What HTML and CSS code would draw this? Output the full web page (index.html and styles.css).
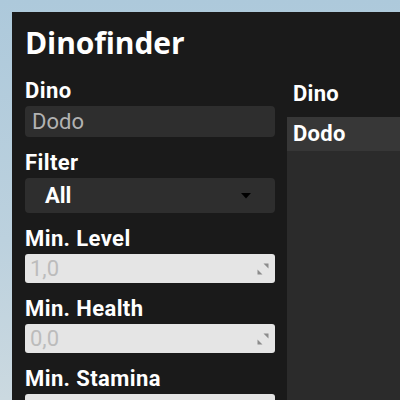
FILE: index.html
```html
<!DOCTYPE html>
<html>
<head>
<meta charset="utf-8">
<link rel="stylesheet" href="styles.css">
</head>
<body>
<div class="panel">
  <h1 class="title">Dinofinder</h1>
  <div class="columns">
    <div class="form">
      <div class="field first">
        <div class="label">Dino</div>
        <div class="text-input">Dodo</div>
      </div>
      <div class="field">
        <div class="label">Filter</div>
        <div class="combo">
          <span class="combo-value">All</span>
          <svg class="combo-arrow" width="10" height="6" viewBox="0 0 10 6"><path d="M0 0H10L5 5.5Z" fill="#000"/></svg>
        </div>
      </div>
      <div class="field">
        <div class="label">Min. Level</div>
        <div class="spin">
          <span class="spin-value">1,0</span>
          <svg class="spin-icon" width="12" height="12" viewBox="0 0 12 12"><path d="M6.5 0.5H11.5V5.5Z M0.5 6.5V11.5H5.5Z" fill="#8c8c8c"/></svg>
        </div>
      </div>
      <div class="field">
        <div class="label">Min. Health</div>
        <div class="spin">
          <span class="spin-value">0,0</span>
          <svg class="spin-icon" width="12" height="12" viewBox="0 0 12 12"><path d="M6.5 0.5H11.5V5.5Z M0.5 6.5V11.5H5.5Z" fill="#8c8c8c"/></svg>
        </div>
      </div>
      <div class="field">
        <div class="label">Min. Stamina</div>
        <div class="spin">
          <span class="spin-value"></span>
          <svg class="spin-icon" width="12" height="12" viewBox="0 0 12 12"><path d="M6.5 0.5H11.5V5.5Z M0.5 6.5V11.5H5.5Z" fill="#8c8c8c"/></svg>
        </div>
      </div>
    </div>
    <div class="results">
      <div class="results-header">Dino</div>
      <div class="results-list">
        <div class="results-row">Dodo</div>
      </div>
    </div>
  </div>
</div>
</body>
</html>
```
FILE: styles.css
```css
html, body {
  margin: 0;
  padding: 0;
  height: 100%;
  overflow: hidden;
}
body {
  background: linear-gradient(to bottom, #adc9db 0%, #bcd1de 60%, #cbd9e0 100%);
  font-family: Roboto, "Open Sans", sans-serif;
  color: #ffffff;
}
.panel {
  margin: 12px 0 0 12px;
  height: 388px;
  overflow: hidden;
  background: #1a1a1a;
  padding: 13px 0 0 13px;
  box-sizing: border-box;
}
.title {
  margin: 0;
  font-family: "Open Sans", Roboto, sans-serif;
  font-weight: 700;
  font-size: 30px;
  line-height: 36px;
  letter-spacing: -0.1px;
}
.columns {
  display: flex;
  gap: 12px;
  align-items: flex-start;
}
.form {
  width: 250px;
  flex: none;
  display: flex;
  flex-direction: column;
}
.field {
  display: flex;
  flex-direction: column;
  gap: 3px;
  margin-top: 14px;
}
.field.first {
  margin-top: 18px;
}
.label {
  font-weight: 700;
  font-size: 22px;
  line-height: 24px;
  letter-spacing: 0.4px;
}
.text-input {
  height: 31px;
  background: #2e2e2e;
  border-radius: 4px;
  padding-left: 7px;
  font-size: 22px;
  line-height: 31px;
  color: #b2b2b2;
}
.combo {
  height: 35px;
  background: #2e2e2e;
  border-radius: 4px;
  display: flex;
  align-items: center;
  padding: 0 24px 0 20px;
}
.combo-value {
  flex: 1;
  font-weight: 700;
  font-size: 22px;
  line-height: 35px;
}
.combo-arrow {
  display: block;
}
.spin {
  height: 29px;
  background: #e5e5e5;
  border-radius: 3px;
  display: flex;
  align-items: center;
  padding: 0 6px 0 5px;
}
.spin-value {
  flex: 1;
  font-size: 22px;
  line-height: 29px;
  color: #bcbcbc;
}
.spin-icon {
  display: block;
}
.results {
  flex: 1;
  margin-top: 21px;
  display: flex;
  flex-direction: column;
}
.results-header {
  font-weight: 700;
  font-size: 22px;
  line-height: 24px;
  padding: 0 0 11px 6px;
  letter-spacing: 0.3px;
}
.results-list {
  background: #2b2b2b;
  height: 300px;
}
.results-row {
  height: 34px;
  background: #373737;
  font-weight: 700;
  font-size: 22px;
  line-height: 34px;
  padding-left: 6px;
  letter-spacing: 0.3px;
}
```
